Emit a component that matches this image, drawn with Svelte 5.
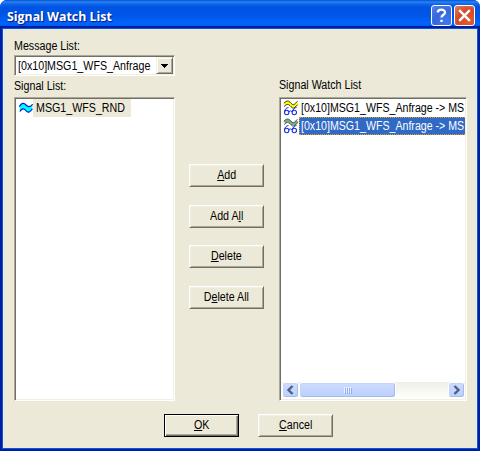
<script>
  const actions = [
    ['', 'A', 'dd'],
    ['Add A', 'l', 'l'],
    ['', 'D', 'elete'],
    ['D', 'e', 'lete All']
  ];
  const watched = ['[0x10]MSG1_WFS_Anfrage -> MS', '[0x10]MSG1_WFS_Anfrage -> MS'];
  let selected = $state(1);
</script>

<div class="window">
  <header>
    <h1><span>Signal Watch List</span></h1>
    <button class="cap help" aria-label="Help">
      <svg width="21" height="21" viewBox="0 0 21 21"><path d="M6.8 7.5C6.8 3.8 14 3.8 14 7.4C14 9.8 10.5 9.7 10.5 12.5M10.5 14.7V17" fill="none" stroke="#fff" stroke-width="2.3" /></svg>
    </button>
    <button class="cap close" aria-label="Close">
      <svg width="21" height="21" viewBox="0 0 21 21"><path d="M5.2 5.2L15.8 15.8M15.8 5.2L5.2 15.8" fill="none" stroke="#fff" stroke-width="2.4" /></svg>
    </button>
  </header>

  <main>
    <div class="columns">
      <section class="left">
        <div class="label"><span class="t">Message List:</span></div>
        <div class="combo sunken">
          <span class="t">[0x10]MSG1_WFS_Anfrage</span>
          <button class="drop" aria-label="Open">
            <svg width="7" height="4" viewBox="0 0 7 4" shape-rendering="crispEdges"><path d="M0 0H7V1H6V2H5V3H4V4H3V3H2V2H1V1H0Z" /></svg>
          </button>
        </div>
        <div class="label second"><span class="t">Signal List:</span></div>
        <div class="list sunken">
          <div class="signal">
            <svg width="14" height="12" viewBox="0 0 14 12">
              <path d="M.5 4.500C2.500 .8 4.800 .5 7 3S11 5 13.500 2.500L13.200 7C11 10.800 9 11 6.800 8.500S3 6.500 1 9.300Z" fill="#0ff" />
              <path d="M.3 4.700C2.500 .8 4.800 .5 7 3S11 5 13.700 2.300M.8 9.500C3 6.200 4.800 6 6.800 8.500S11 10.800 13.400 6.800" fill="none" stroke="#0018d8" stroke-width="1.200" />
            </svg>
            <span class="tag"><span class="t">MSG1_WFS_RND</span></span>
          </div>
        </div>
      </section>

      <section class="middle">
        {#each actions as [a, key, b]}
          <button class="btn"><span class="t">{a}<u>{key}</u>{b}</span></button>
        {/each}
      </section>

      <section class="right">
        <div class="label"><span class="t">Signal Watch List</span></div>
        <div class="list sunken">
          <div class="rows">
            {#each watched as name, i}
              <button class="row" class:selected={selected === i} onclick={() => (selected = i)}>
                <svg width="16" height="16" viewBox="0 0 16 16">
                  <path d="M1.500 4.500C4 1.500 5.500 2 8 4.700S11.500 6 14.500 3" fill="none" stroke={selected === i ? '#84a884' : '#ff0'} stroke-width="3" />
                  <path d="M1 3.200C4 0 5.500 .5 8 3.200S11.500 4.500 14.500 1.200M1 6.700C4 3.500 5.500 4 8 6.700S11.500 8 14.500 4.700" fill="none" stroke={selected === i ? '#2c5245' : '#222'} stroke-width=".9" />
                  <path d="M5.500 7.500C3.500 7.500 1.500 9.500 1.500 12M13.500 7.500C11.500 7.500 9.500 9.500 9.500 12M6 11.500Q7.500 10.300 9 11.500" fill="none" stroke="#1830e0" stroke-width="1" />
                  <circle cx="3.700" cy="12.500" r="2.200" fill="none" stroke="#1830e0" stroke-width="1.100" />
                  <circle cx="11.300" cy="12.500" r="2.200" fill="none" stroke="#1830e0" stroke-width="1.100" />
                </svg>
                <span class="name"><span class="t">{name}</span></span>
              </button>
            {/each}
          </div>
          <div class="scroll">
            <button class="arrow" aria-label="Left"><svg width="15" height="14" viewBox="0 0 15 14"><path d="M9.500 3L5.500 7L9.500 11" fill="none" stroke="#4d6185" stroke-width="2.400" /></svg></button>
            <div class="thumb"><i></i><i></i><i></i><i></i></div>
            <button class="arrow" aria-label="Right"><svg width="15" height="14" viewBox="0 0 15 14"><path d="M5.500 3L9.500 7L5.500 11" fill="none" stroke="#4d6185" stroke-width="2.400" /></svg></button>
          </div>
        </div>
      </section>
    </div>

    <footer>
      <button class="btn default"><span class="t"><u>O</u>K</span></button>
      <button class="btn"><span class="t"><u>C</u>ancel</span></button>
    </footer>
  </main>
</div>

<style>
  :global(body) { margin: 0; background: #fff; overflow: hidden; }
  * { box-sizing: border-box; }
  button { padding: 0; margin: 0; border: 0; font: inherit; color: inherit; }
  svg { display: block; flex: none; }
  .window {
    width: 480px; height: 451px; display: flex; flex-direction: column;
    border-radius: 7px 7px 0 0; overflow: hidden; background: #0831d9;
    font: 12px/14px "Liberation Sans", Arial, sans-serif; color: #000;
  }
  .t { display: inline-block; white-space: pre; transform: scaleX(.89); transform-origin: left center; }
  header {
    height: 29px; flex: none; display: flex; align-items: flex-start; padding: 5px 5px 0 7px;
    background: linear-gradient(#0850d0 0, #2784f5 2px, #0f66ea 4px, #0054e3 7px, #0055e6 15px, #0063fb 23px, #005cf2 26px, #003fc4 29px);
  }
  h1 {
    margin: 2px auto 0 0; font: bold 13px/18px "Open Sans", "Noto Sans", sans-serif;
    color: #fff; text-shadow: 1px 1px 1px #0a1883; white-space: nowrap;
  }
  h1 span { display: inline-block; transform: scaleX(.95); transform-origin: left; }
  .cap { width: 21px; height: 21px; border: 1px solid #fff; border-radius: 3px; overflow: hidden; margin-left: 2px; }
  .cap svg { margin: -1px; }
  .help { background: radial-gradient(circle at 75% 85%, #3c79f5, #3567dc 55%, #5a83e8); }
  .close { background: radial-gradient(circle at 75% 85%, #e65a2c, #d5492a 55%, #e58060); }
  main {
    flex: 1; margin: 0 3px 3px; padding: 10px 10px 0 11px; background: #ece9d8;
    display: flex; flex-direction: column; box-shadow: 0 0 0 1px #0855e8, 0 0 0 3px #001ea0;
  }
  .columns { display: flex; height: 362px; }
  .left { width: 161px; display: flex; flex-direction: column; }
  .label { height: 14px; white-space: nowrap; }
  .sunken {
    background: #fff; border: 1px solid; border-color: #aca899 #fff #fff #aca899;
    box-shadow: inset 1px 1px #716f64, inset -1px -1px #f1efe2;
  }
  .combo { height: 21px; margin-top: 2px; padding: 2px 1px 2px 2px; display: flex; justify-content: space-between; align-items: center; }
  .combo .t { margin-left: 1px; width: 130px; }
  .drop { width: 17px; height: 17px; background: #ece9d8; display: flex; align-items: center; justify-content: center;
    border: 1px solid; border-color: #f1efe2 #716f64 #716f64 #f1efe2; box-shadow: inset 1px 1px #fff, inset -1px -1px #aca899; }
  .second { margin-top: 3px; }
  .left .list { flex: 1; margin-top: 4px; padding: 1px 3px; }
  .signal { display: flex; align-items: center; padding-left: 1px; }
  .tag { width: 98px; height: 18px; background: #ece9d8; padding: 2px 2px 0 3px; line-height: 14px; }
  .middle { width: 75px; margin-left: 14px; padding-top: 125px; }
  .btn {
    display: flex; align-items: center; justify-content: center; width: 75px; height: 23px;
    background: #ece9d8; border: 1px solid; border-color: #fff #716f64 #716f64 #fff;
    box-shadow: inset 1px 1px #f1efe2, inset -1px -1px #aca899;
  }
  .btn .t { transform-origin: center; margin-top: -1px; }
  u { text-underline-offset: 1px; text-decoration-thickness: 1px; }
  .middle .btn + .btn { margin-top: 18px; }
  .middle .btn:nth-child(3) { margin-top: 17px; }
  .right { width: 188px; margin-left: 15px; padding-top: 39px; display: flex; flex-direction: column; }
  .right .list { flex: 1; margin-top: 5px; padding: 1px 1px 2px 2px; display: flex; flex-direction: column; }
  .rows { flex: 1; }
  .row { display: flex; width: 100%; height: 18px; background: none; padding-left: 1px; text-align: left; align-items: center; }
  .name { flex: 1; min-width: 0; height: 18px; padding: 2px 0 0 2px; line-height: 14px; }
  .name .t { width: 162px; transform: scaleX(.885); }
  .selected .name { background: #316ac5; color: #fff; border: 1px dotted #e09a30; border-right: 0; padding: 1px 0 0 1px; }
  .scroll { height: 16px; flex: none; display: flex; background: linear-gradient(#f0efe7, #fefefb); }
  .arrow, .thumb { border: 1px solid #fff; border-radius: 3px; background: linear-gradient(#cddbff, #bccffc); box-shadow: inset -1px -1px #a3bcee, inset 1px 1px #c3d3fd; }
  .arrow { width: 17px; height: 16px; }
  .thumb { width: 97px; margin-right: auto; display: flex; align-items: center; justify-content: center; gap: 1px; }
  .thumb i { width: 1px; height: 6px; background: #eef4fe; box-shadow: 1px 1px #8cb0f8; }
  footer { display: flex; gap: 19px; padding: 13px 0 0 150px; }
  .default { border-color: #000; box-shadow: inset 1px 1px #fff, inset -1px -1px #716f64, inset -2px -2px #aca899; }
</style>
